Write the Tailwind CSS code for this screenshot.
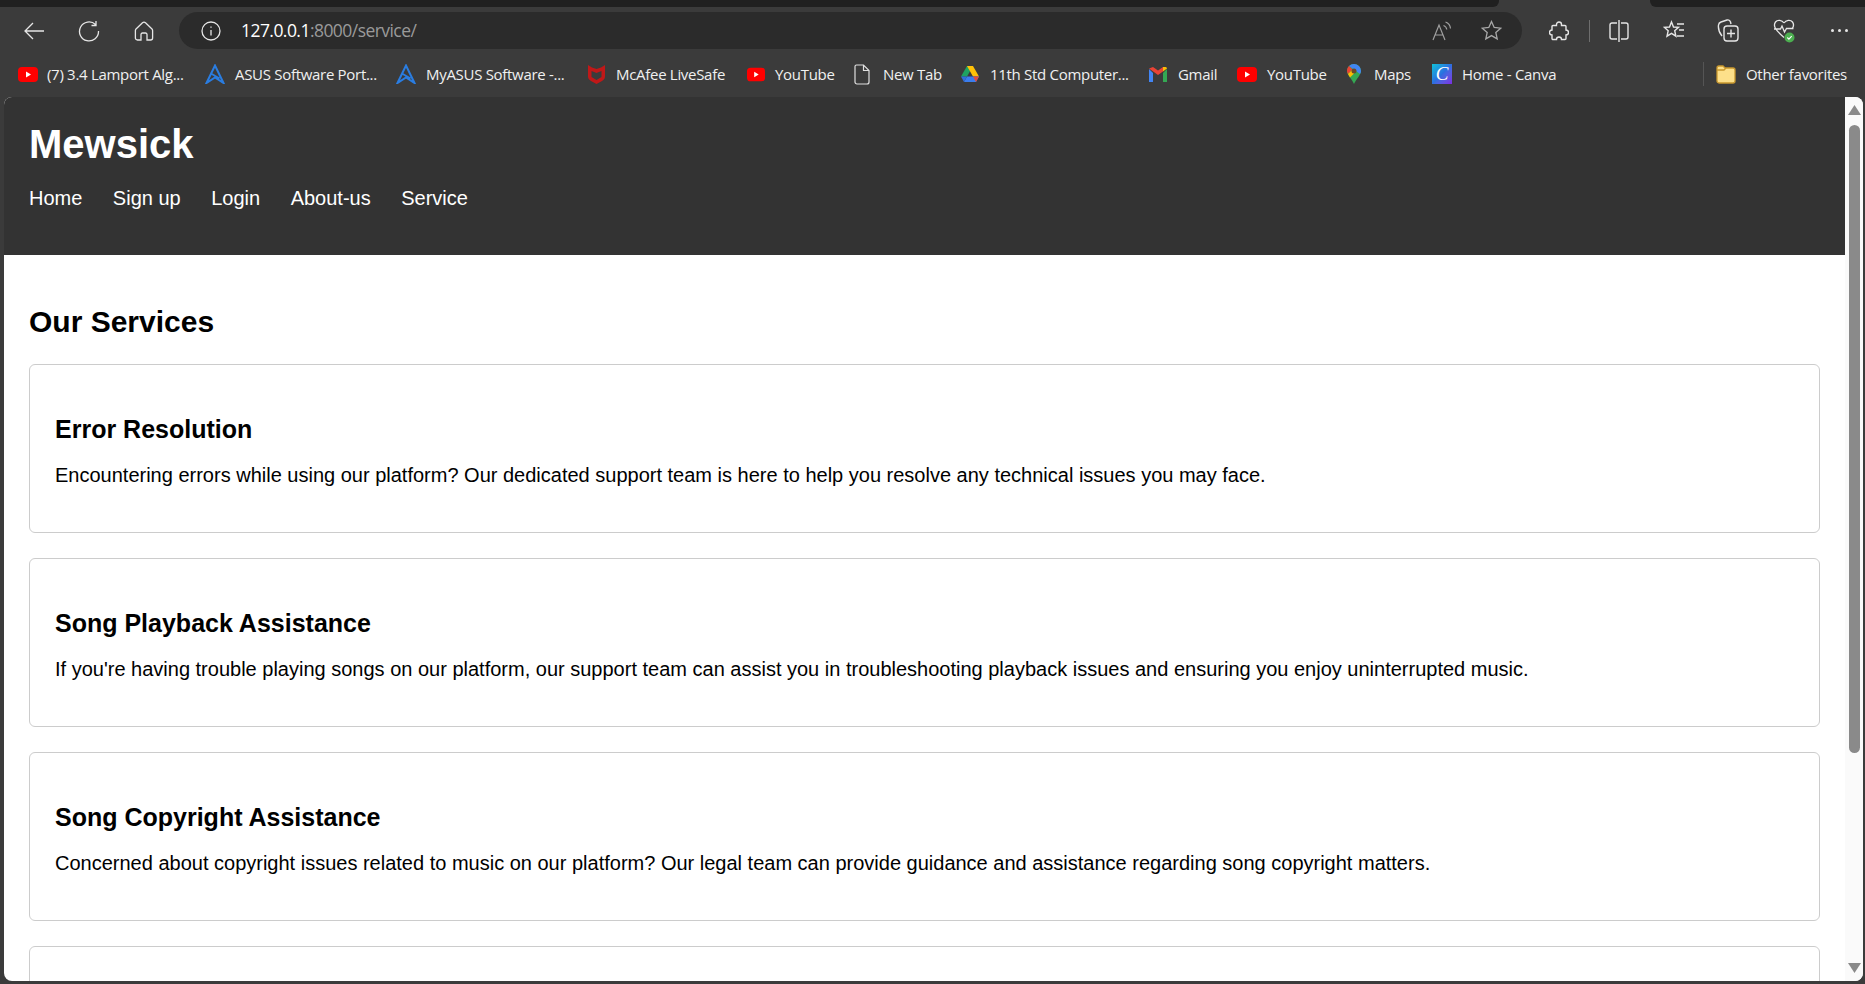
<!DOCTYPE html>
<html lang="en">
<head>
    <meta charset="UTF-8">
    <title>Mewsick - Service</title>
    <script src="https://cdn.jsdelivr.net/npm/@tailwindcss/browser@4"></script>
</head>
<body class="h-screen overflow-hidden bg-[#3b3b3b] font-['Liberation_Sans',sans-serif]">
    <!-- tab strip -->
    <div class="flex h-[7px]">
        <div class="w-[1499px] bg-[#202020] rounded-br-md"></div>
        <div class="w-[151px]"></div>
        <div class="flex-1 bg-[#202020] rounded-bl-md"></div>
    </div>

    <!-- toolbar -->
    <div class="flex items-center h-[47px] pl-[23px] text-[#e6e6e6]">
        <svg class="w-[22px] h-[22px]" viewBox="0 0 22 22" fill="none" stroke="currentColor" stroke-width="1.300"><path d="M21 11H2M10 3l-8 8 8 8"/></svg>
        <svg class="w-[22px] h-[22px] ml-[33px]" viewBox="0 0 22 22" fill="none" stroke="currentColor" stroke-width="1.300"><path d="M17.500 4.500A9.500 9.500 0 1 0 20.500 11M18 1v4.500h-4.500"/></svg>
        <svg class="w-[22px] h-[22px] ml-[33px]" viewBox="0 0 22 22" fill="none" stroke="currentColor" stroke-width="1.300"><path d="M3 9 9.500 2.800a2.200 2.200 0 0 1 3 0L19 9c.4.400.6.900.6 1.500V18a2 2 0 0 1-2 2H14v-5.500a1.500 1.500 0 0 0-1.500-1.500h-3A1.500 1.500 0 0 0 8 14.500V20H4.400a2 2 0 0 1-2-2v-7.500c0-.6.200-1.100.6-1.500z"/></svg>

        <div class="flex items-center w-[1343px] h-[37px] ml-[24px] pl-[22px] pr-[20px] rounded-full bg-[#2b2b2b]">
            <svg class="w-[20px] h-[20px]" viewBox="0 0 20 20" fill="none" stroke="currentColor" stroke-width="1.300"><circle cx="10" cy="10" r="9"/><path d="M10 9v5.500M10 5.500v1.300"/></svg>
            <span class="ml-[20px] text-[17.500px] font-['Open_Sans',sans-serif] tracking-[-0.55px] text-white">127.0.0.1<span class="text-[#9a9a9a]">:8000/service/</span></span>
            <div class="flex-1"></div>
            <svg class="w-[20px] h-[20px] text-[#a0a0a0]" viewBox="0 0 20 20" fill="none" stroke="currentColor" stroke-width="1.200"><path d="M1 19 7 4l6 15M3 14h8M11.500 4.500c1.800.6 3 2 3.300 4M13.500 1c2.800 1 4.700 3.500 5 6.500"/></svg>
            <svg class="w-[21px] h-[21px] ml-[29px] text-[#a8a8a8]" viewBox="0 0 21 21" fill="none" stroke="currentColor" stroke-width="1.300"><path d="m10.500 1.500 2.700 6 6.500.7-4.900 4.300 1.400 6.400-5.700-3.300-5.700 3.300 1.400-6.400L1.300 8.200l6.500-.7z"/></svg>
        </div>

        <svg class="w-[20px] h-[20px] ml-[27px]" viewBox="0 0 20 20" fill="none" stroke="currentColor" stroke-width="1.400"><path d="M7.500 3.500a2.500 2.500 0 0 1 5 0V4.500h3.500a1 1 0 0 1 1 1V9a2.500 2.500 0 0 1 0 5v3.500a1 1 0 0 1-1 1h-3.500a2.500 2.500 0 0 0-5 0H4a1 1 0 0 1-1-1V14a2.500 2.500 0 0 1 0-5V5.500a1 1 0 0 1 1-1h3.500z"/></svg>
        <div class="w-[1px] h-[22px] ml-[20px] bg-[#6e6e6e]"></div>
        <svg class="w-[20px] h-[22px] ml-[19px]" viewBox="0 0 20 22" fill="none" stroke="currentColor" stroke-width="1.400"><path d="M10 0v22M8 3H3a2 2 0 0 0-2 2v12a2 2 0 0 0 2 2h5M12 3h5a2 2 0 0 1 2 2v12a2 2 0 0 1-2 2h-5"/></svg>
        <svg class="w-[22px] h-[22px] ml-[34px]" viewBox="0 0 22 22" fill="none" stroke="currentColor" stroke-width="1.400"><path d="m8.500 2 2 5 5 .4-3.800 3.300 1.200 5.500-4.400-2.900L4 16.200l1.200-5.500L1.500 7.400l5-.4zM14 4h7M16 10h5M14 16h7"/></svg>
        <svg class="w-[22px] h-[23px] ml-[32px]" viewBox="0 0 22 23" fill="none" stroke="currentColor" stroke-width="1.400"><path d="M5 17C2.500 14 1 10 1.500 6c.2-1.500 1-2.500 2.500-3l6-2c1.500-.4 3 .3 3.500 2l.5 2"/><rect x="7" y="7" width="14" height="15" rx="3"/><path d="M14 10.500v8M10 14.500h8"/></svg>
        <svg class="w-[22px] h-[24px] ml-[34px]" viewBox="0 0 22 24" fill="none" stroke="currentColor" stroke-width="1.300"><path d="M11 4C9 1 4.500.5 2.500 3c-2.500 3.500-1 7.500 8.500 15.500M11 4c2-3 6.500-3.500 8.500-1 1.500 2 1.300 4.500-.5 7M1 10h6.500l1.500-3 2.500 6 2-3.500h7"/><circle cx="16.500" cy="18.500" r="5" fill="#4caf50" stroke="none"/><path d="m14.300 18.500 1.600 1.600 2.800-3" stroke="#ffffff" stroke-width="1.100"/></svg>
        <div class="flex gap-[4px] ml-[36px]">
            <div class="w-[3px] h-[3px] rounded-full bg-[#e6e6e6]"></div>
            <div class="w-[3px] h-[3px] rounded-full bg-[#e6e6e6]"></div>
            <div class="w-[3px] h-[3px] rounded-full bg-[#e6e6e6]"></div>
        </div>
    </div>

    <!-- favorites bar -->
    <div class="flex items-center h-[43px] pb-[3px] pl-[18px] gap-[10px] text-[15px] font-['Open_Sans',sans-serif] tracking-[-0.3px] text-[#f0f0f0] whitespace-nowrap">
        <svg class="w-[20px] h-[15px]" viewBox="0 0 20 15"><rect width="20" height="15" rx="4" fill="#f00"/><path d="m8 4.500 5 3-5 3z" fill="#fff"/></svg>
        <span class="w-[137px] -ml-[1px]">(7) 3.4 Lamport Alg...</span>
        <svg class="w-[20px] h-[20px] ml-[11px]" viewBox="0 0 20 20" fill="none" stroke="#2a7de1" stroke-width="2"><path d="M1.500 19 10 1.500 18.500 19 10 13.500zM6 9.500l8.500 5"/></svg>
        <span class="w-[140px]">ASUS Software Port...</span>
        <svg class="w-[20px] h-[20px] ml-[11px]" viewBox="0 0 20 20" fill="none" stroke="#2a7de1" stroke-width="2"><path d="M1.500 19 10 1.500 18.500 19 10 13.500zM6 9.500l8.500 5"/></svg>
        <span class="w-[139px]">MyASUS Software -...</span>
        <svg class="w-[19px] h-[20px] ml-[12px]" viewBox="0 0 19 20" fill="#c01818"><path d="M1 1l4 2.500L9.500 5 14 3.500 18 1v11.500c0 2-1 3-3 4.500l-5.500 3L4 17c-2-1.500-3-2.500-3-4.500zm3.500 6v6l5 3 5-3v-6l-5 2z" fill-rule="evenodd"/></svg>
        <span class="w-[109px]">McAfee LiveSafe</span>
        <svg class="w-[18px] h-[15px] ml-[12px]" viewBox="0 0 20 15"><rect width="20" height="15" rx="4" fill="#f00"/><path d="m8 4.500 5 3-5 3z" fill="#fff"/></svg>
        <span class="w-[57px]">YouTube</span>
        <svg class="w-[16px] h-[21px] ml-[12px]" viewBox="0 0 16 21" fill="none" stroke="#e0e0e0" stroke-width="1.200"><path d="M2.500 1h7L15 6.500V18a2 2 0 0 1-2 2H3a2 2 0 0 1-2-2V2.500A1.500 1.500 0 0 1 2.500 1zM9.500 1v5.500H15"/></svg>
        <span class="w-[55px] ml-[3px]">New Tab</span>
        <svg class="w-[18px] h-[17px] ml-[13px]" viewBox="0 0 18 17"><path d="M6 0h6l-6 10.500H0z" fill="#1ea362"/><path d="M6 0h6l6 10.500h-6z" fill="#ffc107"/><path d="M3 16 6 10.500h12L15 16z" fill="#3b7ded"/><path d="M0 10.500h6L3 16z" fill="#2f6fdc"/><path d="M12 10.500h6L15 16z" fill="#e64a3b"/></svg>
        <span class="w-[136px] ml-[1px]">11th Std Computer...</span>
        <svg class="w-[18px] h-[15px] ml-[13px]" viewBox="0 0 18 15"><path d="M0 2v13h4V6z" fill="#4285f4"/><path d="M18 2v13h-4V6z" fill="#34a853"/><path d="M0 1.500 9 8l5-3.600V0L9 3.500 4 0z" fill="#ea4335"/><path d="M14 0v4.500l4-3C18 0 15.500-.5 14 0z" fill="#fbbc04"/></svg>
        <span class="w-[38px] ml-[1px]">Gmail</span>
        <svg class="w-[20px] h-[15px] ml-[11px]" viewBox="0 0 20 15"><rect width="20" height="15" rx="4" fill="#f00"/><path d="m8 4.500 5 3-5 3z" fill="#fff"/></svg>
        <span class="w-[57px]">YouTube</span>
        <svg class="w-[14px] h-[20px] ml-[13px]" viewBox="0 0 14 20"><path d="M7 0a7 7 0 0 1 7 7c0 4-5 8-7 13-2-5-7-9-7-13a7 7 0 0 1 7-7z" fill="#34a853"/><path d="M7 0a7 7 0 0 1 7 7c0 1-.3 2-1 3L2 2a7 7 0 0 1 5-2z" fill="#4285f4"/><path d="M2 2C.7 3.300 0 5 0 7c0 1 .4 2 1 3l4.500-4.500z" fill="#ea4335"/><path d="M1 10c.6 1.300 1.300 2.400 2 3.500l4-4-1.500-4z" fill="#fbbc04"/><circle cx="7" cy="7" r="2.500" fill="#6b4a2a"/></svg>
        <span class="w-[36px] ml-[3px]">Maps</span>
        <div class="flex items-center justify-center w-[20px] h-[20px] ml-[12px] bg-gradient-to-br from-[#12c2d6] via-[#2b6fe0] to-[#7a2be2] font-['Liberation_Serif',serif] italic text-[19px] text-white">C</div>
        <span class="w-[94px]">Home - Canva</span>
        <div class="w-[1px] h-[24px] ml-[137px] bg-[#555555]"></div>
        <svg class="w-[20px] h-[19px] ml-[2px]" viewBox="0 0 20 19"><path d="M1 3a2 2 0 0 1 2-2h4l2 2h8a2 2 0 0 1 2 2v11a2 2 0 0 1-2 2H3a2 2 0 0 1-2-2z" fill="#fde08a" stroke="#c9982e" stroke-width="1.300"/><path d="M1 5h7l2-2" fill="none" stroke="#c9982e" stroke-width="1.300"/></svg>
        <span>Other favorites</span>
    </div>

    <!-- page viewport -->
    <div class="flex h-[884px] ml-[4px] mr-[2px] rounded-lg overflow-hidden bg-white">
        <div class="flex-1 min-w-0">
            <header class="h-[158px] bg-[#333333] pl-[25px] pt-[24px] text-white">
                <h1 class="text-[40px] leading-[46px] font-bold">Mewsick</h1>
                <nav class="flex gap-[30.500px] mt-[20px] text-[20px] leading-[23px]">
                    <a href="#">Home</a>
                    <a href="#">Sign up</a>
                    <a href="#">Login</a>
                    <a href="#">About-us</a>
                    <a href="#">Service</a>
                </nav>
            </header>
            <main class="px-[25px] pt-[50px] text-black">
                <h2 class="text-[30px] leading-[34px] font-bold mb-[25px]">Our Services</h2>
                <div class="flex flex-col gap-[25px]">
                    <section class="h-[169px] border border-[#cccccc] rounded-[6px] px-[25px] pt-[25px]">
                        <h3 class="mt-[25px] text-[25px] leading-[29px] font-bold">Error Resolution</h3>
                        <p class="mt-[20px] text-[20px] leading-[23px]">Encountering errors while using our platform? Our dedicated support team is here to help you resolve any technical issues you may face.</p>
                    </section>
                    <section class="h-[169px] border border-[#cccccc] rounded-[6px] px-[25px] pt-[25px]">
                        <h3 class="mt-[25px] text-[25px] leading-[29px] font-bold">Song Playback Assistance</h3>
                        <p class="mt-[20px] text-[20px] leading-[23px]">If you're having trouble playing songs on our platform, our support team can assist you in troubleshooting playback issues and ensuring you enjoy uninterrupted music.</p>
                    </section>
                    <section class="h-[169px] border border-[#cccccc] rounded-[6px] px-[25px] pt-[25px]">
                        <h3 class="mt-[25px] text-[25px] leading-[29px] font-bold">Song Copyright Assistance</h3>
                        <p class="mt-[20px] text-[20px] leading-[23px]">Concerned about copyright issues related to music on our platform? Our legal team can provide guidance and assistance regarding song copyright matters.</p>
                    </section>
                    <section class="h-[169px] border border-[#cccccc] rounded-[6px]"></section>
                </div>
            </main>
        </div>

        <!-- scrollbar -->
        <div class="flex flex-col items-center w-[18px] pt-[8px] bg-[#fafafa]">
            <svg class="w-[13px] h-[10px]" viewBox="0 0 13 10" fill="#8a8a8a"><path d="M6.500 0 13 10H0z"/></svg>
            <div class="w-[11px] h-[628px] mt-[10px] rounded-full bg-[#8a8a8a]"></div>
            <div class="flex-1"></div>
            <svg class="w-[13px] h-[10px] mb-[8px]" viewBox="0 0 13 10" fill="#8a8a8a"><path d="M0 0h13L6.500 10z"/></svg>
        </div>
    </div>
</body>
</html>
